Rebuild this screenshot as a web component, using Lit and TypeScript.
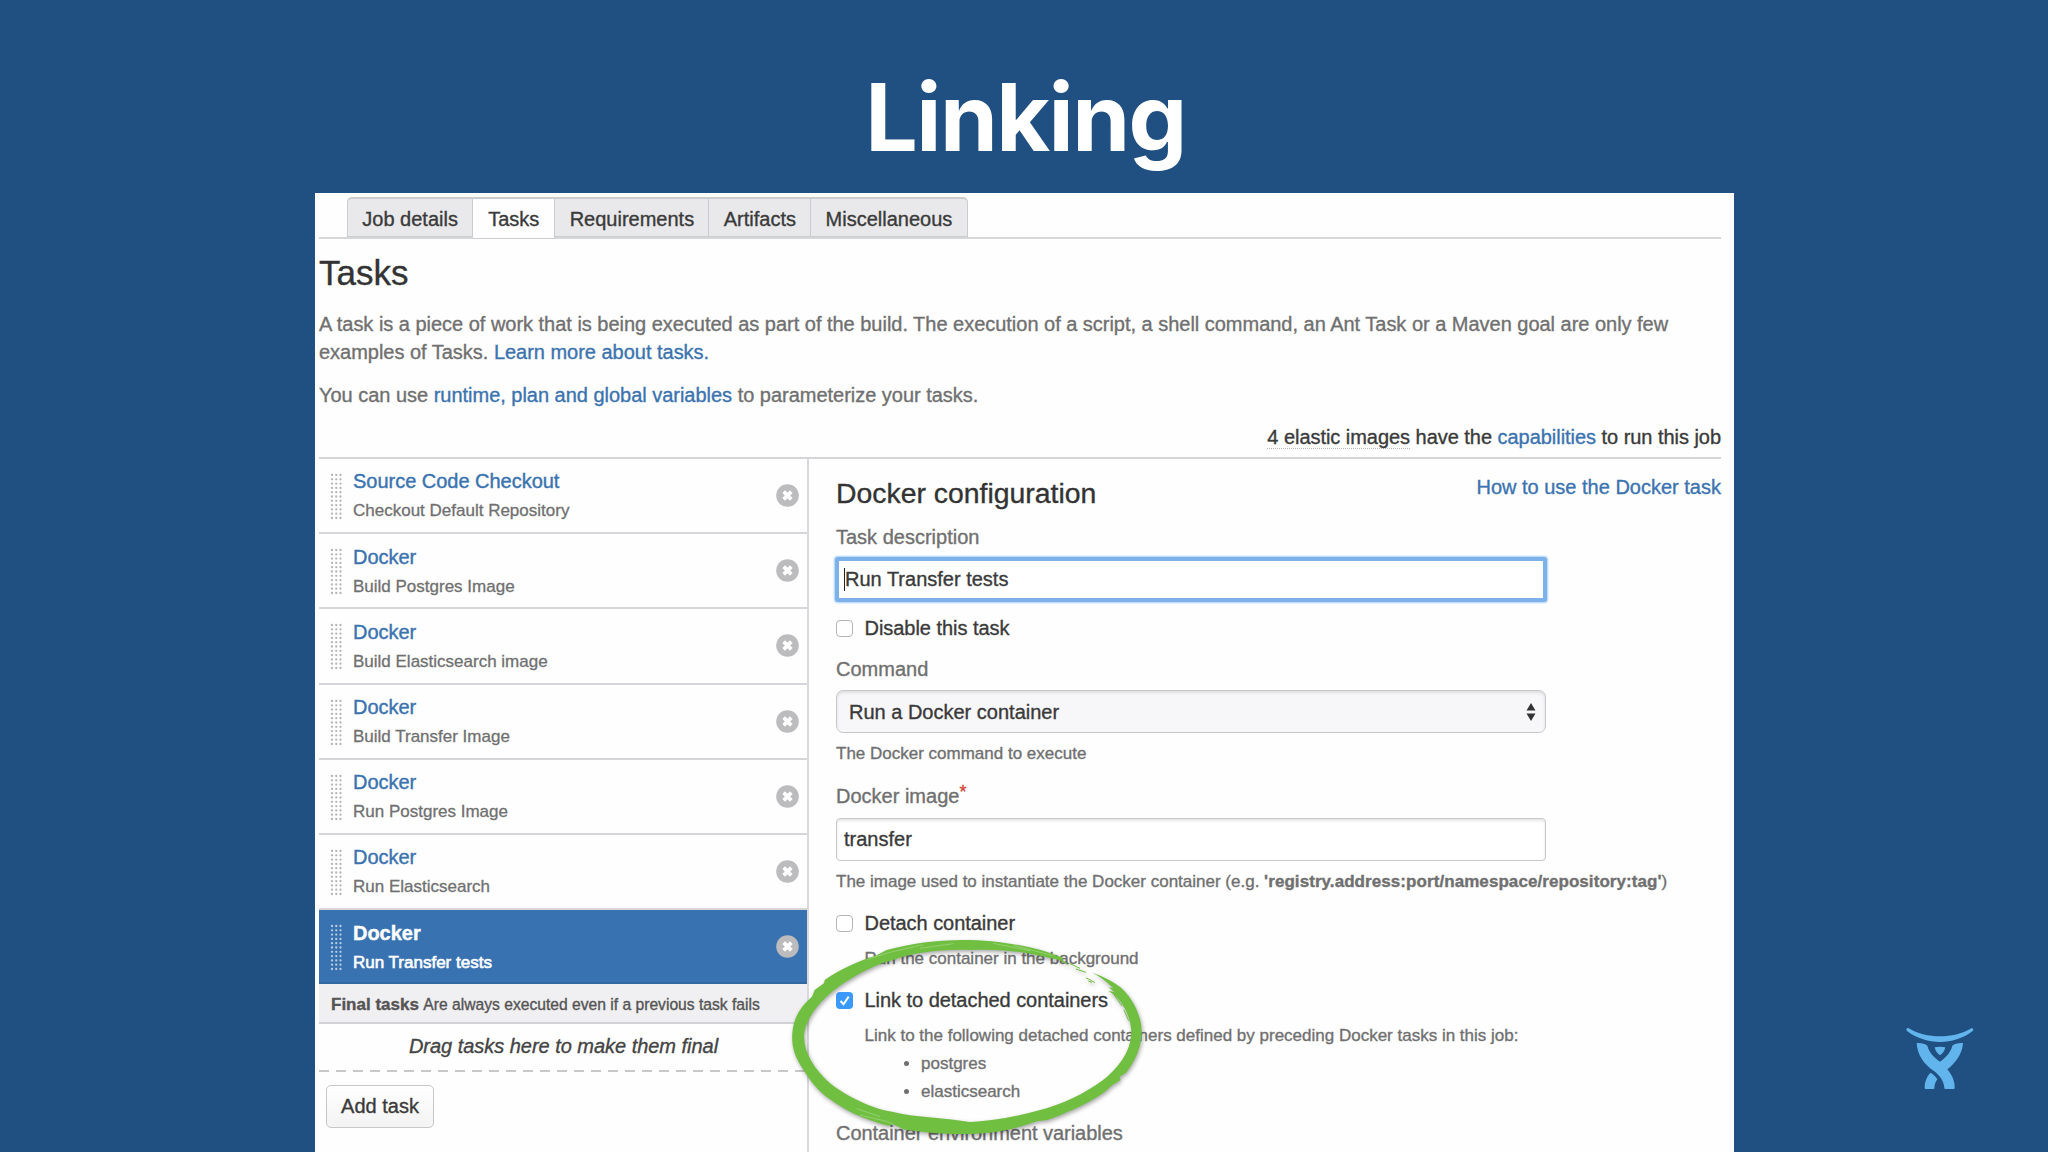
import { LitElement, html, svg, css } from 'lit';
import { customElement, property } from 'lit/decorators.js';
import { classMap } from 'lit/directives/class-map.js';

interface Task {
  name: string;
  description: string;
  selected?: boolean;
}

const TABS = ['Job details', 'Tasks', 'Requirements', 'Artifacts', 'Miscellaneous'];
const ACTIVE_TAB = 'Tasks';

const TASKS: Task[] = [
  { name: 'Source Code Checkout', description: 'Checkout Default Repository' },
  { name: 'Docker', description: 'Build Postgres Image' },
  { name: 'Docker', description: 'Build Elasticsearch image' },
  { name: 'Docker', description: 'Build Transfer Image' },
  { name: 'Docker', description: 'Run Postgres Image' },
  { name: 'Docker', description: 'Run Elasticsearch' },
  { name: 'Docker', description: 'Run Transfer tests', selected: true },
];

/**
 * One draggable row of the task list.
 */
@customElement('task-item')
export class TaskItem extends LitElement {
  static styles = css`
    :host {
      display: block;
    }

    .row {
      box-sizing: border-box;
      height: 75.2px;
      display: flex;
      padding: 0 8px 0 11px;
      border-bottom: 2px solid #d6d5d9;
    }

    .handle {
      flex: none;
      width: 13px;
      height: 47px;
      margin-top: 14px;
      fill: #b4b4b4;
    }

    .text {
      flex: 1;
      margin-left: 10px;
      padding-top: 9px;
      line-height: 28px;
      white-space: nowrap;
    }

    .name {
      margin-top: -0.6px;
      font-size: 20px;
      letter-spacing: -0.02px;
      color: #3b73af;
      -webkit-text-stroke: 0.4px currentColor;
    }

    .description {
      margin-top: 2px;
      font-size: 17px;
      color: #707070;
      -webkit-text-stroke: 0.3px currentColor;
    }

    .remove {
      flex: none;
      width: 23px;
      height: 23px;
      margin-top: 25px;
    }

    .row--selected {
      height: 74px;
      background: #3872b0;
      border-bottom-color: #3268a2;
    }

    .row--selected .handle {
      fill: #b9cde3;
    }

    .row--selected .name {
      color: #fff;
      font-weight: bold;
    }

    .row--selected .description {
      color: #fff;
      -webkit-text-stroke: 0.6px #fff;
    }
  `;

  @property({ attribute: false }) task!: Task;

  private _dots() {
    const dots = [];
    for (let y = 0; y < 11; y++) {
      for (let x = 0; x < 3; x++) {
        dots.push(svg`<circle cx=${2 + x * 4.25} cy=${2 + y * 4.3} r="1.15" />`);
      }
    }
    return dots;
  }

  render() {
    return html`
      <div class=${classMap({ row: true, 'row--selected': !!this.task.selected })}>
        <svg class="handle" viewBox="0 0 13 47">${this._dots()}</svg>
        <div class="text">
          <div class="name">${this.task.name}</div>
          <div class="description">${this.task.description}</div>
        </div>
        <svg class="remove" viewBox="0 0 23 23">
          <circle cx="11.5" cy="11.5" r="11.3" fill="#bcbbbd" />
          <path d="M7.7 7.7l7.6 7.6M15.3 7.7l-7.6 7.6" stroke="#fff" stroke-width="3.8" />
        </svg>
      </div>
    `;
  }
}

@customElement('app-root')
export class AppRoot extends LitElement {
  static styles = css`
    :host {
      display: block;
      font-family: 'Liberation Sans', Arial, sans-serif;
      font-size: 20px;
      color: #3a3a3a;
    }

    .slide {
      position: relative;
      box-sizing: border-box;
      width: 2048px;
      height: 1152px;
      padding-left: 315px;
      overflow: hidden;
      background: #205081;
    }

    .slide-title {
      margin: 0;
      width: 1421px;
      height: 193px;
      line-height: 234px;
      text-align: center;
      font-family: Inter, sans-serif;
      font-size: 93px;
      font-weight: 700;
      letter-spacing: -1.6px;
      color: #fff;
    }

    .panel {
      box-sizing: border-box;
      width: 1419px;
      height: 959px;
      padding: 4px 13px 0 4px;
      background: #fefefe;
      -webkit-text-stroke: 0.35px currentColor;
      white-space: nowrap;
    }

    /* Tabs */
    .tabs {
      box-sizing: border-box;
      display: flex;
      height: 42px;
      padding-left: 28px;
      border-bottom: 2px solid #d6d7d9;
    }

    .tab {
      box-sizing: border-box;
      height: 40px;
      padding: 0 14.3px;
      line-height: 40px;
      background: #e9e9eb;
      border: 1px solid #cbcccf;
      border-top-width: 2px;
      border-left-width: 0;
    }

    .tab:first-child {
      border-left-width: 1px;
      border-top-left-radius: 5px;
    }

    .tab:last-child {
      border-top-right-radius: 5px;
    }

    .tab--active {
      height: 42px;
      padding: 0 15px;
      background: #fefefe;
    }

    .page-title {
      margin: 14px 0 0;
      font-size: 35px;
      line-height: 40px;
      font-weight: 400;
      color: #333;
    }

    p {
      margin: 14px 0 0;
      line-height: 28.4px;
      letter-spacing: -0.02px;
      color: #707070;
    }

    .page-title + p {
      margin-top: 17px;
    }

    .link {
      color: #3b73af;
    }

    .capable {
      margin-top: 14px;
      line-height: 28.6px;
      letter-spacing: -0.04px;
      text-align: right;
    }

    .elastic {
      border-bottom: 1px dotted #b4b4b4;
    }

    .columns {
      display: flex;
      height: 693px;
      margin-top: 5.2px;
      border-top: 2px solid #d6d6d9;
    }

    /* Task list */
    .list {
      box-sizing: border-box;
      flex: none;
      width: 490px;
      border-right: 2px solid #dad9dd;
    }

    .final {
      box-sizing: border-box;
      height: 40px;
      padding-left: 12px;
      line-height: 42px;
      font-size: 15.65px;
      color: #555;
      background: #f0eff1;
      border-bottom: 2px solid #d2d1d5;
    }

    .final b {
      font-size: 17px;
      margin-right: 1px;
    }

    .drop {
      height: 46px;
      padding-left: 1px;
      line-height: 44px;
      text-align: center;
      font-style: italic;
      letter-spacing: -0.03px;
      color: #444;
    }

    .dashes {
      height: 2px;
      background: repeating-linear-gradient(90deg, #c8c8ca 0 10px, transparent 10px 17px);
    }

    .button {
      box-sizing: border-box;
      width: 108px;
      height: 43px;
      margin: 13px 0 0 7px;
      line-height: 40px;
      text-align: center;
      background: linear-gradient(#fff, #f3f3f4);
      border: 1px solid #c8c8cb;
      border-radius: 5px;
    }

    /* Configuration form */
    .config {
      flex: 1;
      padding: 16px 0 0 27px;
    }

    .config-header {
      display: flex;
      justify-content: space-between;
      height: 36px;
    }

    .config-title {
      margin: 0;
      font-size: 28.4px;
      line-height: 36px;
      font-weight: 400;
      color: #333;
    }

    .config-header .link {
      line-height: 28px;
      margin-top: -2px;
    }

    .label {
      margin-top: 14px;
      line-height: 28px;
      color: #707070;
    }

    .label--first {
      margin-top: 12px;
    }

    .required {
      position: relative;
      top: -5px;
      font-size: 18px;
      color: #d04437;
    }

    .field {
      box-sizing: border-box;
      width: 710px;
      height: 43px;
      margin-top: 6.5px;
      padding-left: 7px;
      line-height: 41px;
      background: #fff;
      border: 1.5px solid #c9c7cc;
      border-radius: 4px;
      box-shadow: inset 0 2px 3px rgba(0, 0, 0, 0.1);
    }

    .field--focus {
      display: flex;
      align-items: center;
      width: 712px;
      height: 45px;
      margin: 6px 0 0 -1px;
      padding-left: 5px;
      border: 4px solid #7cb1ea;
      border-radius: 3px;
      box-shadow: 0 0 2px 1px #a9d0f7;
    }

    .caret {
      width: 1px;
      height: 23px;
      background: #222;
    }

    .field--select {
      display: flex;
      align-items: center;
      justify-content: space-between;
      margin-top: 7px;
      padding: 1px 9px 0 12px;
      background: #f7f6f9;
      border-radius: 7px;
    }

    .arrows {
      width: 10px;
      height: 18px;
      fill: #333;
    }

    .help {
      margin-top: 7.3px;
      line-height: 28px;
      font-size: 17px;
      color: #707070;
    }

    .help b {
      letter-spacing: 0.07px;
    }

    .help--indented {
      margin-top: 7.6px;
      padding-left: 28.5px;
    }

    .check {
      display: flex;
      align-items: center;
      gap: 11.5px;
      height: 28px;
      margin-top: 13.2px;
      letter-spacing: -0.04px;
    }

    .field--focus + .check {
      margin-top: 12px;
    }

    .check + .label {
      margin-top: 13px;
    }

    .box {
      box-sizing: border-box;
      width: 17px;
      height: 17px;
      background: #fff;
      border: 1.5px solid #b5b4b8;
      border-radius: 4px;
    }

    .box--on {
      background: #3b99fc;
      border: 0;
    }

    .box svg {
      display: block;
    }

    .links {
      margin: 0;
      padding-left: 85px;
      line-height: 28.5px;
      font-size: 17px;
      color: #707070;
    }

    .label--env {
      margin-top: 12px;
      letter-spacing: -0.04px;
    }

    /* Marker ring and logo lie over the slide */
    .ring {
      position: absolute;
      left: 780px;
      top: 900px;
      width: 400px;
      height: 252px;
      filter: drop-shadow(1px 2px 2px rgba(0, 0, 0, 0.35));
    }

    .logo {
      position: absolute;
      left: 1880px;
      top: 1010px;
      width: 120px;
      height: 100px;
      fill: #62b4ec;
    }
  `;

  private _ring() {
    return html`
      <svg class="ring" viewBox="0 0 1200 756" fill="#70bf41">
        <path
          d="M868 198 L838 180 L800 172 C730 154 650 146 570 150 C480 147 400 158 340 180 C290 192 240 218 190 250
             C130 292 85 340 73 395 C66 450 100 505 150 550 C200 590 280 628 340 636 C410 653 500 654 570 666
             C660 660 730 645 800 625 C870 603 940 566 984 528 C1032 484 1054 440 1054 395 C1052 350 1030 310 1006 287
             L985 272 L1004 277 L986 262 L1000 265 C980 244 958 230 935 217 C975 232 1004 248 1024 264
             C1062 300 1085 350 1085 395 C1086 440 1062 490 1038 518 L1018 531 L1022 540 L996 556 L974 576
             C910 620 850 642 802 660 L770 664 C700 690 630 703 560 702 C490 704 420 696 370 688 L340 673 L325 677
             C250 659 190 628 150 598 C110 570 90 540 72 512 C44 472 34 440 37 400 C40 356 60 320 96 290
             L104 270 L132 250 L134 240 C180 208 240 182 290 166 L320 150 C400 128 480 118 570 120 C660 122 740 138 800 155 L850 174 L846 178 Z"
        />
        <path
          d="M868 190 L900 205 M888 207 L918 217 M918 233 L945 248 M925 243 L936 247 M1002 284 L1026 318 M1032 330 L1046 362"
          stroke="#70bf41"
          stroke-width="3"
        />
        <path
          d="M262 178 L330 157 L430 134 M420 145 L520 131 M640 130 L750 152 M700 136 L815 166 M240 645 L320 664 L340 673 M230 626 L300 650"
          stroke="#a5d886"
          stroke-width="2"
          fill="none"
        />
      </svg>
    `;
  }

  private _logo() {
    return html`
      <svg class="logo" viewBox="0 0 360 300">
        <path
          d="M86 55 C115 72 146 79 180 79 C214 79 245 72 274 55 C279 53 282 59 278 63 C248 86 214 96 180 96 C146 96 112 86 81 63 C77 59 81 52 86 55 Z"
        />
        <path
          d="M110 99 Q132 98 142 107 C148 129 163 143 180 155 C197 143 211 129 217 107 Q227 98 249 99
             C247 133 225 160 202 178 C215 194 225 212 224 234 Q224 237 221 237 H196 Q193 237 193 234
             C192 214 180 198 163 184 C133 164 112 136 110 99 Z"
        />
        <path d="M151 188 C139 202 133 218 134 234 Q134 237 137 237 H161 Q163 237 163 234 C163 224 167 216 172 208 C168 200 160 193 151 188 Z" />
        <path d="M164 112 Q180 108 196 112 Q193 127 180 136 Q167 127 164 112 Z" />
      </svg>
    `;
  }

  private _check(label: string, checked = false) {
    return html`
      <div class="check">
        <span class=${classMap({ box: true, 'box--on': checked })}>
          ${checked
            ? html`<svg viewBox="0 0 17 17" width="17" height="17">
                <path d="M4.5 9l3 3.2 5.2-7.6" fill="none" stroke="#fff" stroke-width="2" />
              </svg>`
            : null}
        </span>
        <span>${label}</span>
      </div>
    `;
  }

  render() {
    return html`
      <div class="slide">
        <h1 class="slide-title">Linking</h1>
        <div class="panel">
          <nav class="tabs">
            ${TABS.map(
              (tab) => html`<div class=${classMap({ tab: true, 'tab--active': tab === ACTIVE_TAB })}>${tab}</div>`
            )}
          </nav>
          <h2 class="page-title">Tasks</h2>
          <p>
            A task is a piece of work that is being executed as part of the build. The execution of a script, a shell
            command, an Ant Task or a Maven goal are only few<br />examples of Tasks.
            <span class="link">Learn more about tasks.</span>
          </p>
          <p>You can use <span class="link">runtime, plan and global variables</span> to parameterize your tasks.</p>
          <div class="capable">
            <span class="elastic">4 elastic images</span> have the <span class="link">capabilities</span> to run this job
          </div>
          <div class="columns">
            <section class="list">
              ${TASKS.map((task) => html`<task-item .task=${task}></task-item>`)}
              <div class="final"><b>Final tasks</b> Are always executed even if a previous task fails</div>
              <div class="drop">Drag tasks here to make them final</div>
              <div class="dashes"></div>
              <div class="button">Add task</div>
            </section>
            <section class="config">
              <div class="config-header">
                <h3 class="config-title">Docker configuration</h3>
                <span class="link">How to use the Docker task</span>
              </div>
              <div class="label label--first">Task description</div>
              <div class="field field--focus"><span class="caret"></span>Run Transfer tests</div>
              ${this._check('Disable this task')}
              <div class="label">Command</div>
              <div class="field field--select">
                Run a Docker container
                <svg class="arrows" viewBox="0 0 10 18"><path d="M5 0l4.5 7.5h-9zM5 18l4.5-7.5h-9z" /></svg>
              </div>
              <div class="help">The Docker command to execute</div>
              <div class="label">Docker image<span class="required">*</span></div>
              <div class="field">transfer</div>
              <div class="help">
                The image used to instantiate the Docker container (e.g.
                <b>'registry.address:port/namespace/repository:tag'</b>)
              </div>
              ${this._check('Detach container')}
              <div class="help help--indented">Run the container in the background</div>
              ${this._check('Link to detached containers', true)}
              <div class="help help--indented">
                Link to the following detached containers defined by preceding Docker tasks in this job:
              </div>
              <ul class="links">
                <li>postgres</li>
                <li>elasticsearch</li>
              </ul>
              <div class="label label--env">Container environment variables</div>
            </section>
          </div>
        </div>
        ${this._ring()} ${this._logo()}
      </div>
    `;
  }
}
